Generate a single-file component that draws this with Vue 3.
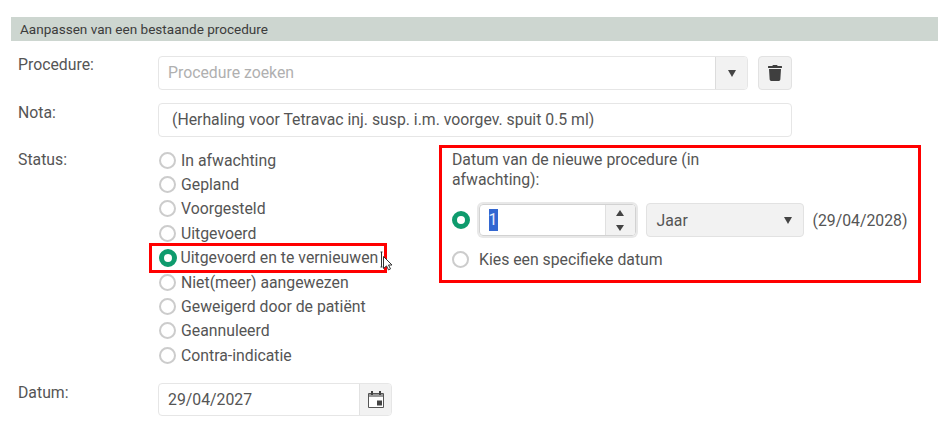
<script setup>
const statuses = [
  { label: 'In afwachting' },
  { label: 'Gepland' },
  { label: 'Voorgesteld' },
  { label: 'Uitgevoerd' },
  { label: 'Uitgevoerd en te vernieuwen', selected: true },
  { label: 'Niet(meer) aangewezen' },
  { label: 'Geweigerd door de patiënt' },
  { label: 'Geannuleerd' },
  { label: 'Contra-indicatie' },
]
</script>

<template>
  <div class="page">
    <div class="header">Aanpassen van een bestaande procedure</div>

    <div class="row first">
      <div class="label">Procedure:</div>
      <div class="combo">
        <div class="combo-text">Procedure zoeken</div>
        <div class="combo-arrow"><span class="caret"></span></div>
      </div>
      <button class="trash" type="button" aria-label="Verwijderen">
        <svg width="14" height="16" viewBox="0 0 448 512"><path fill="#3f3f3f" d="M432 32H312l-9.4-18.7A24 24 0 0 0 281.1 0H166.8a23.72 23.72 0 0 0-21.4 13.3L136 32H16A16 16 0 0 0 0 48v32a16 16 0 0 0 16 16h416a16 16 0 0 0 16-16V48a16 16 0 0 0-16-16zM53.2 467a48 48 0 0 0 47.9 45h245.8a48 48 0 0 0 47.9-45L416 128H32z"/></svg>
      </button>
    </div>

    <div class="row second">
      <div class="label nota-label">Nota:</div>
      <div class="nota">(Herhaling voor Tetravac inj. susp. i.m. voorgev. spuit 0.5 ml)</div>
    </div>

    <div class="row third">
      <div class="label status-label">Status:</div>
      <div class="status-list">
        <div v-for="s in statuses" :key="s.label" class="radio-row" :class="{ marked: s.selected }">
          <span class="radio" :class="{ on: s.selected }"></span>
          <span class="radio-text">{{ s.label }}</span>
          <svg v-if="s.selected" class="cursor" width="13" height="20" viewBox="0 0 13 20">
            <path d="M1.500 1v15M.5 1h2M.5 16h2" stroke="#333" fill="none" stroke-width="1"/>
            <path d="M3.500 5.500v12l3-2.600 2 4 2-1-2-3.900h3.500z" fill="#fff" stroke="#333" stroke-width="1"/>
          </svg>
        </div>
      </div>

      <div class="panel">
        <div class="panel-title">Datum van de nieuwe procedure (in afwachting):</div>
        <div class="panel-line">
          <span class="radio on"></span>
          <div class="spin">
            <div class="spin-value"><span class="selected-text">1</span></div>
            <div class="spin-arrows">
              <span class="tri up"></span>
              <span class="tri down"></span>
            </div>
          </div>
          <div class="unit">
            <span>Jaar</span>
            <span class="caret"></span>
          </div>
          <span class="result">(29/04/2028)</span>
        </div>
        <div class="panel-choice">
          <span class="radio"></span>
          <span class="radio-text">Kies een specifieke datum</span>
        </div>
      </div>
    </div>

    <div class="row fourth">
      <div class="label date-label">Datum:</div>
      <div class="date">
        <div class="date-text">29/04/2027</div>
        <div class="date-addon">
          <svg width="16" height="17" viewBox="0 0 16 17">
            <path d="M.5 2.500h15v14H.5z" fill="#fff" stroke="#555" stroke-width="1"/>
            <path d="M1 3h14v3H1z" fill="#999"/>
            <path d="M3 0h2v4H3zM11 0h2v4h-2z" fill="#444"/>
            <path d="M9 9.500h5v5H9z" fill="#444"/>
          </svg>
        </div>
      </div>
    </div>
  </div>
</template>

<style>
html, body { margin: 0; background: #fff; }
</style>

<style scoped>
.page {
  width: 938px;
  height: 422px;
  padding-top: 17px;
  box-sizing: border-box;
  overflow: hidden;
  font-family: Roboto, "Liberation Sans", sans-serif;
  font-size: 15.800px;
  color: #555;
  background: #fff;
}
.header {
  margin-left: 11px;
  height: 24px;
  line-height: 24px;
  padding-left: 9px;
  background: #cdd6d0;
  color: #3c3c3c;
  font-size: 13.560px;
}
.row {
  display: flex;
  padding-left: 18px;
}
.first { margin-top: 15px; }
.second { margin-top: 13px; }
.third { margin-top: 11px; }
.fourth { margin-top: 15px; }
.label {
  width: 140px;
  flex: none;
  line-height: 20px;
  margin-top: -1px;
}
.nota-label { margin-top: 0; }
.date-label { margin-top: 0; }
.status-label { margin-top: 2px; }
.combo {
  display: flex;
  width: 590px;
  height: 34px;
  box-sizing: border-box;
  border: 1px solid #e6e6e6;
  border-radius: 4px;
}
.combo-text {
  flex: 1;
  line-height: 32px;
  padding-left: 9px;
  color: #b0b0b0;
}
.combo-arrow {
  width: 31px;
  display: flex;
  align-items: center;
  justify-content: center;
  background: #f2f2f2;
  border-left: 1px solid #dcdcdc;
  border-radius: 0 3px 3px 0;
}
.caret {
  width: 0;
  height: 0;
  border-left: 4.500px solid transparent;
  border-right: 4.500px solid transparent;
  border-top: 7px solid #444;
}
.trash {
  margin-left: 10px;
  width: 34px;
  height: 34px;
  padding: 0;
  display: flex;
  align-items: center;
  justify-content: center;
  background: #f2f2f2;
  border: 1px solid #e2e2e2;
  border-radius: 4px;
}
.nota {
  width: 634px;
  height: 34px;
  box-sizing: border-box;
  border: 1px solid #e6e6e6;
  border-radius: 4px;
  line-height: 32px;
  padding-left: 13px;
}
.status-list {
  width: 282px;
  flex: none;
  display: flex;
  flex-direction: column;
}
.radio-row {
  position: relative;
  height: 24.400px;
  display: flex;
  align-items: center;
  gap: 5px;
  padding-left: 1px;
}
.marked::before {
  content: "";
  position: absolute;
  left: -9px;
  top: -3px;
  width: 238px;
  height: 30px;
  box-sizing: border-box;
  border: 3px solid #f00;
}
.cursor {
  position: absolute;
  left: 222px;
  top: 5px;
}
.radio {
  width: 17px;
  height: 17px;
  flex: none;
  box-sizing: border-box;
  border: 2px solid #ccc;
  border-radius: 50%;
  background: #fff;
}
.radio.on {
  width: 18px;
  height: 18px;
  margin: 0 -1px 0 -0.500px;
  border: 5px solid #0e9b6d;
}
.radio-text {
  position: relative;
  white-space: nowrap;
}
.panel {
  width: 482px;
  height: 138px;
  margin-top: -3px;
  margin-left: -1px;
  box-sizing: border-box;
  border: 3px solid #f00;
  padding: 2px 9px 0 10px;
  flex: none;
}
.panel-title {
  width: 290px;
  line-height: 20px;
}
.panel-line {
  display: flex;
  align-items: center;
  margin-top: 13px;
  height: 34px;
}
.spin {
  display: flex;
  width: 157px;
  height: 32px;
  box-sizing: border-box;
  margin-left: 10px;
  border: 1px solid #d2d2d2;
  border-radius: 4px;
  box-shadow: 0 0 0 2px #e8e8e8;
}
.spin-value {
  flex: 1;
  padding-left: 9px;
  display: flex;
  align-items: center;
}
.selected-text {
  background: #3367d1;
  color: #e8eefc;
  line-height: 22px;
  width: 9px;
}
.spin-arrows {
  width: 29px;
  display: flex;
  flex-direction: column;
  align-items: center;
  justify-content: center;
  gap: 9px;
  background: #f2f2f2;
  border-left: 1px solid #e0e0e0;
  border-radius: 0 3px 3px 0;
}
.tri {
  width: 0;
  height: 0;
  border-left: 4.500px solid transparent;
  border-right: 4.500px solid transparent;
}
.tri.up { border-bottom: 6px solid #444; }
.tri.down { border-top: 6px solid #444; }
.unit {
  display: flex;
  align-items: center;
  justify-content: space-between;
  width: 158px;
  height: 34px;
  box-sizing: border-box;
  margin-left: 10px;
  padding: 0 11px 0 10px;
  background: #f2f2f2;
  border: 1px solid #e2e2e2;
  border-radius: 4px;
}
.result { margin-left: 9px; white-space: nowrap; }
.panel-choice {
  display: flex;
  align-items: center;
  gap: 10px;
  margin-top: 10px;
  height: 24px;
}
.date {
  display: flex;
  width: 234px;
  height: 33px;
  box-sizing: border-box;
  border: 1px solid #e6e6e6;
  border-radius: 4px;
}
.date-text {
  flex: 1;
  line-height: 31px;
  padding-left: 9px;
}
.date-addon {
  width: 31px;
  display: flex;
  align-items: center;
  justify-content: center;
  background: #f2f2f2;
  border-left: 1px solid #e2e2e2;
  border-radius: 0 3px 3px 0;
}
</style>
